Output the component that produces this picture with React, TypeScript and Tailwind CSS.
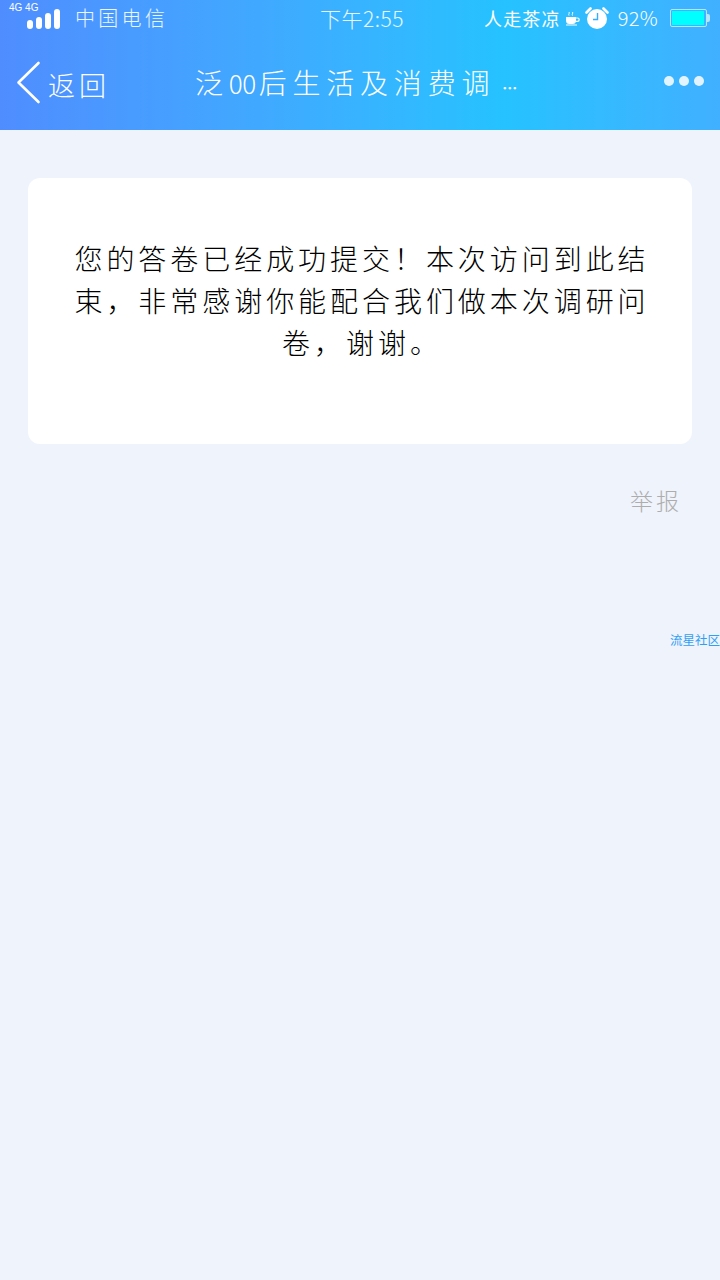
const cjk = "font-['Noto_Sans_CJK_SC','Noto_Sans',sans-serif]";

function Signal() {
  return (
    <div className="relative h-[30px] w-[62px]">
      <span className="absolute left-[9px] top-0 font-['Liberation_Sans',sans-serif] text-[10px] leading-[10px] text-white">4G 4G</span>
      <div className="absolute left-[27px] top-[6px] flex items-end gap-[3px]">
        <span className="h-[9px] w-[6px] rounded-[3px] bg-white" />
        <span className="h-[12px] w-[6px] rounded-[3px] bg-white" />
        <span className="h-[16px] w-[6px] rounded-[3px] bg-white" />
        <span className="h-[20px] w-[6px] rounded-[3px] bg-white" />
      </div>
    </div>
  );
}

function Cup() {
  return (
    <svg width="16" height="16" viewBox="0 0 16 16" className="shrink-0">
      <path d="M1 7h10v3.5A3.5 3.5 0 0 1 7.5 14h-3A3.5 3.5 0 0 1 1 10.5z" fill="#fff" />
      <path d="M11 8h1.5a1.7 1.7 0 0 1 0 3.4H10.5" fill="none" stroke="#fff" strokeWidth="1.2" />
      <path d="M4 5.5C3 4 5 3.5 4 2M7.5 5.5C6.5 4 8.5 3.5 7.5 2" fill="none" stroke="#fff" strokeWidth="1" />
      <path d="M1 15h11" stroke="#fff" strokeWidth="1" />
    </svg>
  );
}

function Alarm() {
  return (
    <svg width="24" height="24" viewBox="0 0 24 24" className="shrink-0">
      <circle cx="12" cy="13" r="10" fill="#fff" />
      <path d="M1.5 6.5 5.5 2.5M22.5 6.5 18.5 2.5" stroke="#fff" strokeWidth="2.6" strokeLinecap="round" />
      <path d="M12.5 7v6.5H8" stroke="#35aeff" strokeWidth="1.4" fill="none" />
    </svg>
  );
}

function Battery() {
  return (
    <div className="flex items-center">
      <div className="h-[18px] w-[37px] rounded-[2px] border border-[#b5e6ff] p-[1px]">
        <div className="h-full w-[32px] bg-[#00ffff]" />
      </div>
      <span className="h-[8px] w-[3px] rounded-r-[2px] bg-[#b5e6ff]" />
    </div>
  );
}

export default function App() {
  return (
    <div className={`min-h-[1280px] w-[720px] bg-[#eff3fb] ${cjk}`}>
      <header className="h-[130px] bg-gradient-to-r from-[#4f8dff] via-[#25c2ff] via-70% to-[#40b0ff] pt-[3px] text-white">
        {/* status bar */}
        <div className="relative flex h-[30px] items-center pr-[10px]">
          <Signal />
          <span className="ml-[13px] text-[20px] font-light leading-[30px] tracking-[3.3px] text-white/90">中国电信</span>
          <span className="absolute left-[320px] top-0 text-[21px] font-light leading-[30px] tracking-[0.5px] text-white/90">下午2:55</span>
          <div className="ml-auto flex items-center">
            <span className="text-[18px] leading-[30px] tracking-[1.2px]">人走茶凉</span>
            <span className="ml-[4px]"><Cup /></span>
            <span className="ml-[4px]"><Alarm /></span>
            <span className="ml-[9px] text-[20px] font-light leading-[30px] tracking-[0.3px]">92%</span>
            <span className="ml-[12px]"><Battery /></span>
          </div>
        </div>
        {/* nav bar */}
        <div className="relative flex h-[97px] items-center pb-[2px]">
          <svg width="26" height="44" viewBox="0 0 26 44" className="ml-[16px] mt-[4px] shrink-0">
            <path d="M22.5 2 2.5 21.5 22.5 41" fill="none" stroke="#fff" strokeWidth="2.6" strokeLinecap="round" strokeLinejoin="round" />
          </svg>
          <span className="ml-[6px] mt-[8px] text-[27px] font-light leading-[36px] tracking-[4px]">返回</span>
          <span className="absolute left-[195px] top-[30px] text-[28px] font-light leading-[38px] tracking-[5.8px]">泛<span className="mr-[3px] text-[26px] tracking-[-0.5px]">00</span>后生活及消费调<span className="ml-[7px] text-[15px] font-bold tracking-normal">…</span></span>
          <div className="ml-auto mr-[16px] flex gap-[5px]">
            <span className="h-[10px] w-[10px] rounded-full bg-white/85" />
            <span className="h-[10px] w-[10px] rounded-full bg-white/85" />
            <span className="h-[10px] w-[10px] rounded-full bg-white/85" />
          </div>
        </div>
      </header>

      <main className="px-[28px] pt-[48px]">
        <section className="flex h-[266px] items-center justify-center rounded-[12px] bg-white pb-[22px] pl-[46px] pr-[42px]">
          <p className="text-center text-[28px] font-light leading-[42px] tracking-[3.95px] text-black">
            您的答卷已经成功提交！本次访问到此结束，非常感谢你能配合我们做本次调研问卷，谢谢。
          </p>
        </section>
        <div className="mt-[39px] flex justify-end pr-[10px]">
          <span className="text-[23px] font-light leading-[34px] tracking-[3px] text-[#adadad]">举报</span>
        </div>
      </main>

      <div className="mt-[115px] flex justify-end">
        <span className="text-[12.5px] leading-[16px] text-[#2f9ff5]">流星社区</span>
      </div>
    </div>
  );
}
